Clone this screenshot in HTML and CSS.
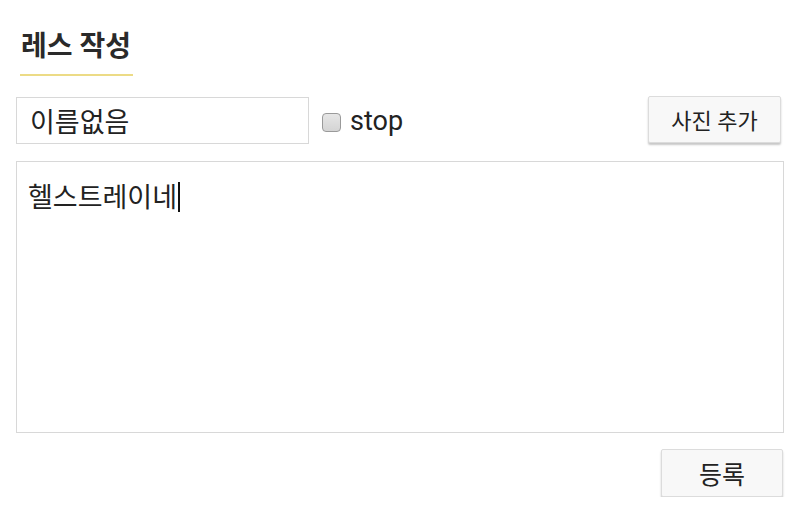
FILE: index.html
```html
<!DOCTYPE html>
<html lang="ko">
<head>
    <meta charset="UTF-8">
    <meta name="viewport" content="width=device-width, initial-scale=1.0">
    <title>레스 작성</title>
    <link rel="stylesheet" href="styles.css">
</head>
<body>
    <div class="container">
        <h1 class="title">레스 작성</h1>

        <div class="top-row">
            <input type="text" class="name-input" value="이름없음">
            <label class="stop-label">
                <input type="checkbox" class="stop-check">
                <span>stop</span>
            </label>
            <button class="btn photo-btn">사진 추가</button>
        </div>

        <!-- 본문 입력 -->
        <div class="content-box">헬스트레이네<span class="caret"></span></div>

        <div class="bottom-row">
            <button class="btn submit-btn">등록</button>
        </div>
    </div>
</body>
</html>
```

FILE: styles.css
```css
* {
    box-sizing: border-box;
    margin: 0;
    padding: 0;
    font-family: 'Roboto', 'Noto Sans CJK KR', sans-serif;
}

body {
    background: #fff;
    color: #222;
}

.container {
    padding: 28px 16px 0 16px;
}

.title {
    display: inline-block;
    margin-left: 4px;
    font-size: 28px;
    font-weight: bold;
    line-height: 37px;
    padding: 0 2px 9px 1px;
    border-bottom: 2px solid #ecdb86;
    color: #2a2a2a;
}

.top-row {
    display: flex;
    align-items: center;
    margin-top: 21px;
    padding-right: 3px;
}

.name-input {
    width: 293px;
    height: 47px;
    border: 1px solid #d8d8d8;
    padding: 0 13px;
    font-size: 27px;
    color: #222;
    outline: none;
}

.stop-label {
    display: flex;
    align-items: center;
    margin-left: 13px;
    font-size: 27px;
    color: #222;
}

.stop-check {
    appearance: none;
    -webkit-appearance: none;
    width: 19px;
    height: 19px;
    border: 1px solid #9a9a9a;
    border-radius: 4px;
    background: linear-gradient(#e6e6e6, #d4d4d4);
    margin: 3px 9px 0 0;
}

.btn {
    background: #f8f8f8;
    border: 1px solid #dcdcdc;
    border-radius: 2px;
    box-shadow: 0 2px 2px rgba(0, 0, 0, 0.22);
    color: #222;
    cursor: pointer;
}

.photo-btn {
    margin-left: auto;
    width: 133px;
    height: 47px;
    font-size: 22px;
    margin-top: -3px;
}

.content-box {
    margin-top: 17px;
    height: 272px;
    border: 1px solid #d8d8d8;
    padding: 16px 11px;
    font-size: 27px;
    line-height: 40px;
    color: #222;
}

.caret {
    display: inline-block;
    width: 2px;
    height: 30px;
    background: #111;
    vertical-align: -5px;
    margin-left: 1px;
}

.bottom-row {
    display: flex;
    justify-content: flex-end;
    margin-top: 16px;
    padding-right: 1px;
}

.submit-btn {
    width: 122px;
    height: 48px;
    font-size: 25px;
}
```
